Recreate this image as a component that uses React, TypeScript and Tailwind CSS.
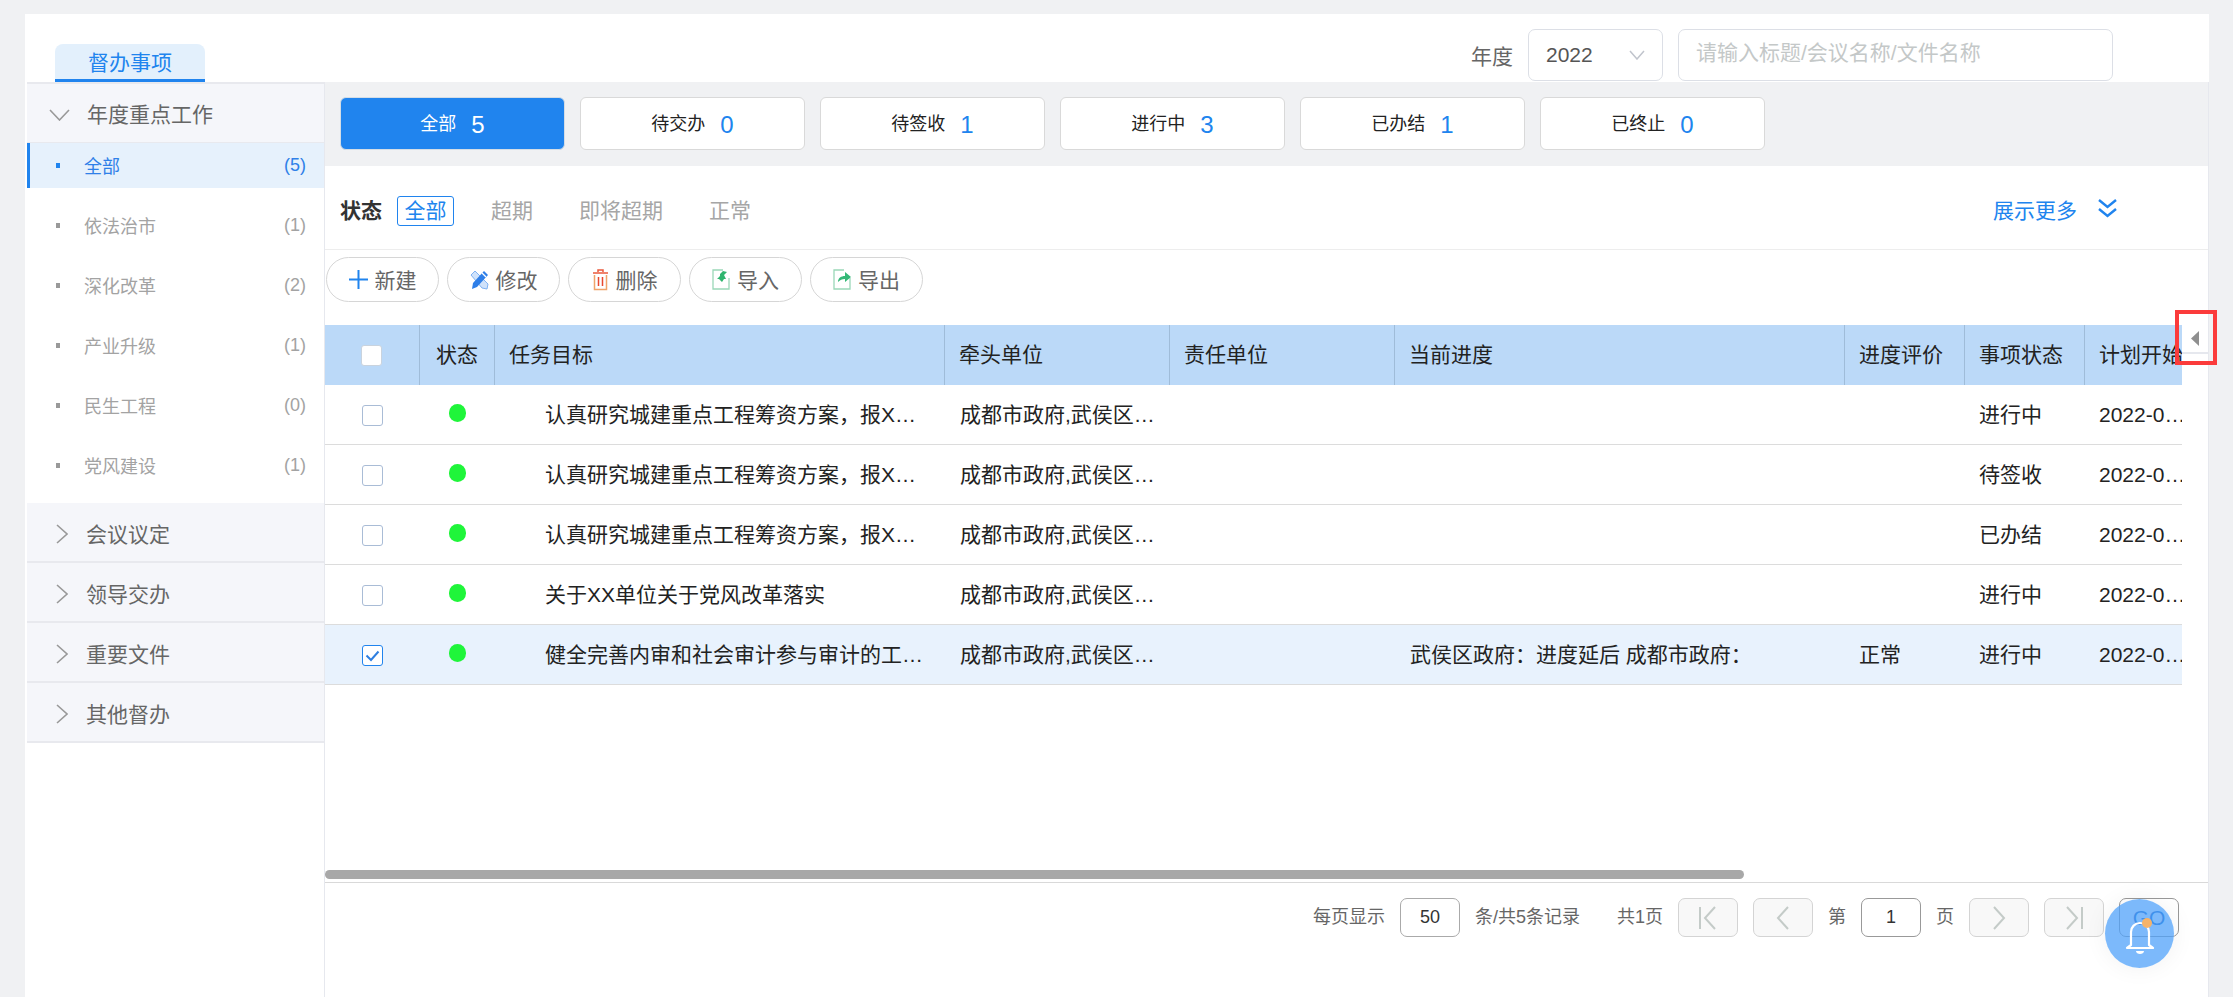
const summary = [
  { label: "全部", count: 5, active: true },
  { label: "待交办", count: 0 },
  { label: "待签收", count: 1 },
  { label: "进行中", count: 3 },
  { label: "已办结", count: 1 },
  { label: "已终止", count: 0 },
];

const categories = [
  { label: "全部", count: 5, active: true },
  { label: "依法治市", count: 1 },
  { label: "深化改革", count: 2 },
  { label: "产业升级", count: 1 },
  { label: "民生工程", count: 0 },
  { label: "党风建设", count: 1 },
];

const longTask = "认真研究城建重点工程筹资方案，报XX市";
const units = "成都市政府,武侯区政府";

const rows = [
  { task: longTask, state: "进行中" },
  { task: longTask, state: "待签收" },
  { task: longTask, state: "已办结" },
  { task: "关于XX单位关于党风改革落实", state: "进行中" },
  {
    task: "健全完善内审和社会审计参与审计的工作机",
    progress: "武侯区政府：进度延后 成都市政府：",
    rating: "正常",
    state: "进行中",
    selected: true,
  },
];

const gridCols =
  "grid w-[1880px] grid-cols-[95px_75px_450px_225px_225px_450px_120px_120px_120px]";

function Chevron({ open }: { open?: boolean }) {
  return open ? (
    <svg width="21" height="12" viewBox="0 0 21 12" fill="none" className="shrink-0">
      <path d="M1 1l9.5 10L20 1" stroke="#999" strokeWidth="1.6" />
    </svg>
  ) : (
    <svg width="12" height="20" viewBox="0 0 12 20" fill="none" className="shrink-0">
      <path d="M1 1l10 9-10 9" stroke="#999" strokeWidth="1.6" />
    </svg>
  );
}

function AccordionHead({ label }: { label: string }) {
  return (
    <div className="flex h-[60px] items-center border-b-2 border-[#e8e9ee] bg-[#f5f6fa] text-[21px] text-[#666]">
      <div className="ml-[29px] mr-[18px] flex translate-y-[2px]">
        <Chevron />
      </div>
      <span className="translate-y-[3px]">{label}</span>
    </div>
  );
}

function Checkbox({ checked, head }: { checked?: boolean; head?: boolean }) {
  return (
    <span
      className={
        checked
          ? "flex h-[21px] w-[21px] items-center justify-center rounded-[3px] border border-[#2084ee] bg-white"
          : head
            ? "block h-[21px] w-[21px] rounded-[3px] border border-[#c9d3de] bg-white"
            : "block h-[21px] w-[21px] rounded-[3px] border border-[#a9bcd6] bg-white"
      }
    >
      {checked && (
        <svg width="15" height="12" viewBox="0 0 15 12" fill="none">
          <path d="M1.5 5.5l4.5 4.5 7.5-8.500" stroke="#2f7fe0" strokeWidth="2" />
        </svg>
      )}
    </span>
  );
}

function ToolIcon({ name }: { name: string }) {
  if (name === "new") {
    return (
      <svg width="19" height="19" viewBox="0 0 19 19" fill="none">
        <path d="M9.500 0v19M0 9.500h19" stroke="#2084ee" strokeWidth="2" />
      </svg>
    );
  }
  if (name === "edit") {
    return (
      <svg width="19" height="20" viewBox="0 0 19 20" fill="none">
        <path d="M1 5l4-4 13 13-1 5-5-1z" fill="#cfe2fb" stroke="#7fb2f2" strokeWidth="1" />
        <path d="M14 1l4 4L7 17l-5 2 1-6z" fill="#2f7fe8" />
        <path d="M12 3l4 4" stroke="#fff" strokeWidth="1.200" />
      </svg>
    );
  }
  if (name === "delete") {
    return (
      <svg width="17" height="22" viewBox="0 0 17 22" fill="none">
        <path d="M1 4h15M6 3V1h5v2" stroke="#ea5a3c" strokeWidth="1.500" />
        <path d="M2.500 6v14.500h12V6" stroke="#f0a36a" strokeWidth="1.500" />
        <path d="M6.500 8v9M10.500 8v9" stroke="#e8482f" strokeWidth="1.500" />
      </svg>
    );
  }
  return (
    <svg width="18" height="21" viewBox="0 0 18 21" fill="none">
      <path d="M11 1H1v19h16V9" stroke="#9ad8b8" strokeWidth="1.300" />
      {name === "import" ? (
        <path d="M11 2l4 1-3 3 2 4H12l-2 3-3-3H5l3-3V5z" fill="#2fb56e" />
      ) : (
        <path d="M5 13c0-4 3-6 7-6V3l6 5-6 5V10c-3 0-5 1-7 3z" fill="#35b877" />
      )}
    </svg>
  );
}

function PageButton({ kind }: { kind: string }) {
  return (
    <button className="flex h-[39px] w-[60px] items-center justify-center rounded-[7px] border border-[#d4d4d4] bg-[#f8f8f8]">
      <svg width="22" height="26" viewBox="0 0 22 26" fill="none">
        {kind === "first" && <path d="M3 2v22M18 2L8 13l10 11" stroke="#c4cbc8" strokeWidth="2" />}
        {kind === "prev" && <path d="M16 2L6 13l10 11" stroke="#c4cbc8" strokeWidth="2" />}
        {kind === "next" && <path d="M6 2l10 11L6 24" stroke="#c4cbc8" strokeWidth="2" />}
        {kind === "last" && <path d="M19 2v22M4 2l10 11L4 24" stroke="#c4cbc8" strokeWidth="2" />}
      </svg>
    </button>
  );
}

function PageInput({ value, dark }: { value: string; dark?: boolean }) {
  return (
    <span
      className={
        dark
          ? "flex h-[39px] w-[60px] items-center justify-center rounded-[7px] border border-[#999] text-[18px] text-[#333]"
          : "flex h-[39px] w-[60px] items-center justify-center rounded-[7px] border border-[#aaa] text-[18px] text-[#333]"
      }
    >
      {value}
    </span>
  );
}

export default function App() {
  return (
    <div className="relative h-[997px] w-[2233px] overflow-hidden bg-[#f0f1f3] pl-[25px] pt-[14px] font-['Liberation_Sans','Noto_Sans_CJK_SC',sans-serif]">
      <div className="flex h-[983px] w-[2184px] flex-col bg-white">
        {/* top bar */}
        <div className="flex h-[68px] shrink-0 items-end justify-between">
          <div className="ml-[30px] flex h-[38px] w-[150px] items-center justify-center rounded-t-[8px] border-b-[3px] border-[#2084ee] bg-[#e3f0fc] pt-[2px] text-[21px] text-[#2084ee]">
            督办事项
          </div>
          <div className="mb-[1px] mr-[96px] flex items-center">
            <span className="mr-[15px] translate-y-[2px] text-[21px] text-[#666]">年度</span>
            <div className="mr-[15px] flex h-[52px] w-[135px] items-center justify-between rounded-[7px] border border-[#dcdfe6] pl-[17px] pr-[17px] text-[21px] text-[#555]">
              2022
              <svg width="16" height="10" viewBox="0 0 16 10" fill="none">
                <path d="M1 1l7 8 7-8" stroke="#c0c4cc" strokeWidth="1.500" />
              </svg>
            </div>
            <div className="flex h-[52px] w-[435px] items-center rounded-[7px] border border-[#dcdfe6] pb-[4px] pl-[17px] text-[21px] text-[#c4c8c8]">
              请输入标题/会议名称/文件名称
            </div>
          </div>
        </div>

        <div className="flex min-h-0 flex-1">
          {/* sidebar */}
          <aside className="ml-[2px] w-[298px] shrink-0 border-r border-[#e6e8ee] border-t-2 border-t-[#e8e9ee]">
            <div className="flex h-[59px] items-center border-b border-[#e8e9ee] bg-[#f5f6fa] text-[21px] text-[#666]">
              <div className="ml-[22px] mr-[17px] flex translate-y-[2px]">
                <Chevron open />
              </div>
              <span className="translate-y-[2px]">年度重点工作</span>
            </div>
            <div className="flex flex-col gap-[15px] pb-[15px]">
              {categories.map((item) => (
                <div
                  key={item.label}
                  className={
                    item.active
                      ? "flex h-[45px] items-center border-l-[3px] border-[#2084ee] bg-[#e6f1fc] pl-[26px] pr-[18px] text-[18px] text-[#2f80e8]"
                      : "flex h-[45px] items-center border-l-[3px] border-transparent pl-[26px] pr-[18px] text-[18px] text-[#a3a3a3]"
                  }
                >
                  <span
                    className={
                      item.active
                        ? "mr-[24px] h-[5px] w-[4px] bg-[#2084ee]"
                        : "mr-[24px] h-[5px] w-[4px] bg-[#999]"
                    }
                  />
                  <span className="flex-1 translate-y-[2px]">{item.label}</span>
                  <span>({item.count})</span>
                </div>
              ))}
            </div>
            <AccordionHead label="会议议定" />
            <AccordionHead label="领导交办" />
            <AccordionHead label="重要文件" />
            <AccordionHead label="其他督办" />
          </aside>

          {/* main */}
          <main className="relative flex min-w-0 flex-1 flex-col border-r border-[#e6e8ee]">
            <div className="flex h-[84px] shrink-0 gap-[15px] bg-[#f0f1f3] px-[15px] py-[15px]">
              {summary.map((item) => (
                <div
                  key={item.label}
                  className={
                    item.active
                      ? "flex h-[53px] w-[225px] items-center justify-center gap-[15px] rounded-[6px] border border-[#d4dde6] bg-[#2084ee] pt-[2px] text-[18px] text-white"
                      : "flex h-[53px] w-[225px] items-center justify-center gap-[15px] rounded-[6px] border border-[#d9d9d9] bg-white pt-[2px] text-[18px] text-[#222]"
                  }
                >
                  {item.label}
                  <span className={item.active ? "text-[24px] text-white" : "text-[24px] text-[#2084ee]"}>
                    {item.count}
                  </span>
                </div>
              ))}
            </div>

            {/* status filter */}
            <div className="flex h-[84px] shrink-0 items-center border-b border-[#ededed] pl-[15px] pr-[90px] pt-[6px] text-[21px]">
              <span className="mr-[15px] font-bold text-[#333]">状态</span>
              <span className="mr-[37px] flex h-[30px] w-[57px] items-center justify-center rounded-[3px] border border-[#2084ee] text-[#2084ee]">
                全部
              </span>
              <span className="mr-[46px] text-[#a6a6a6]">超期</span>
              <span className="mr-[46px] text-[#a6a6a6]">即将超期</span>
              <span className="text-[#a6a6a6]">正常</span>
              <span className="ml-auto mr-[20px] text-[#2084ee]">展示更多</span>
              <svg width="21" height="19" viewBox="0 0 21 19" fill="none" className="-mt-[5px]">
                <path d="M2 1l8.500 7L19 1M2 10l8.500 7 8.500-7" stroke="#2084ee" strokeWidth="2.400" />
              </svg>
            </div>

            {/* toolbar */}
            <div className="flex shrink-0 gap-[8px] pb-[23px] pl-[1px] pt-[7px]">
              {[
                { icon: "new", label: "新建" },
                { icon: "edit", label: "修改" },
                { icon: "delete", label: "删除" },
                { icon: "import", label: "导入" },
                { icon: "export", label: "导出" },
              ].map((btn) => (
                <button
                  key={btn.label}
                  className="flex h-[45px] w-[113px] items-center justify-center gap-[7px] rounded-full border border-[#d6d6d6] bg-white text-[21px] text-[#666]"
                >
                  <ToolIcon name={btn.icon} />
                  <span className="translate-y-[1px]">{btn.label}</span>
                </button>
              ))}
            </div>

            {/* table */}
            <div className="flex h-[557px] w-[1857px] shrink-0 flex-col overflow-hidden">
              <div className="flex-1">
                <div className={`${gridCols} h-[60px] items-center bg-[#bbd9f8] text-[21px] text-[#222]`}>
                  <div className="flex h-full items-center justify-center border-r border-[#9fbcd9] pr-[1px]">
                    <Checkbox head />
                  </div>
                  <div className="flex h-full items-center justify-center border-r border-[#9fbcd9]">状态</div>
                  {["任务目标", "牵头单位", "责任单位", "当前进度", "进度评价", "事项状态", "计划开始时间"].map(
                    (title) => (
                      <div
                        key={title}
                        className="flex h-full items-center overflow-hidden whitespace-nowrap border-r border-[#9fbcd9] pl-[14px] pr-[15px]"
                      >
                        {title}
                      </div>
                    ),
                  )}
                </div>
                {rows.map((row, i) => (
                  <div
                    key={i}
                    className={
                      row.selected
                        ? `${gridCols} h-[60px] border-b border-[#dcdcdc] bg-[#e8f2fd] text-[21px] text-[#222]`
                        : `${gridCols} h-[60px] border-b border-[#dcdcdc] text-[21px] text-[#222]`
                    }
                  >
                    <div className="flex items-center justify-center pt-[2px]">
                      <Checkbox checked={row.selected} />
                    </div>
                    <div className="flex items-center justify-center pb-[4px]">
                      <span className="h-[18px] w-[17px] rounded-full bg-[#1ff53a]" />
                    </div>
                    <div className="self-center truncate pl-[50px] pr-[17px]">{row.task}</div>
                    <div className="self-center truncate px-[15px]">{units}</div>
                    <div />
                    <div className="self-center truncate px-[15px]">{row.progress}</div>
                    <div className="self-center pl-[14px] pr-[15px]">{row.rating}</div>
                    <div className="self-center pl-[14px] pr-[15px]">{row.state}</div>
                    <div className="self-center truncate pl-[14px] pr-[15px]">2022-01-01</div>
                  </div>
                ))}
              </div>
              <div className="mb-[3px] h-[9px] w-[1419px] shrink-0 rounded-full bg-[#a8a8a8]" />
            </div>

            {/* pagination */}
            <div className="flex flex-1 items-start justify-end gap-[15px] border-t border-[#d9d9d9] pr-[29px] pt-[15px] text-[18px] text-[#666]">
              <span className="flex h-[39px] items-center">每页显示</span>
              <PageInput value="50" />
              <span className="mr-[22px] flex h-[39px] items-center">条/共5条记录</span>
              <span className="flex h-[39px] items-center">共1页</span>
              <PageButton kind="first" />
              <PageButton kind="prev" />
              <span className="flex h-[39px] items-center">第</span>
              <PageInput value="1" dark />
              <span className="flex h-[39px] items-center">页</span>
              <PageButton kind="next" />
              <PageButton kind="last" />
              <span className="flex h-[39px] w-[60px] items-center justify-center rounded-[7px] border border-[#999] text-[21px] text-[#0f5fc0]">
                GO
              </span>
            </div>

            {/* collapse handle */}
            <div className="absolute left-[1857px] top-[243px] flex h-[29px] w-[26px] items-center justify-center border-b-2 border-[#e6e8ee] bg-white">
              <svg width="8" height="15" viewBox="0 0 8 15">
                <path d="M8 0v15L0 7.500z" fill="#8f8f8f" />
              </svg>
            </div>
            <div className="absolute left-[1850px] top-[228px] h-[55px] w-[42px] border-4 border-[#fb3b3b]" />
          </main>
        </div>
      </div>

      {/* floating notification */}
      <div className="absolute bottom-[29px] right-[59px] flex h-[69px] w-[69px] items-center justify-center rounded-full bg-[#50a1fa]/75 shadow-[0_0_24px_rgba(0,0,0,0.06)]">
        <svg width="30" height="36" viewBox="0 0 30 36" fill="none" className="mt-[7px]">
          <path
            d="M6 26V13c0-5 4-9 9-9s9 4 9 9v13l4 3H2z"
            stroke="#fff"
            strokeWidth="2.200"
            strokeLinejoin="round"
          />
          <path d="M11 32h8c0 2-2 3-4 3s-4-1-4-3z" fill="#fff" />
        </svg>
        <span className="absolute left-[37px] top-[19px] h-[10px] w-[10px] rounded-full bg-[#f5b36a]" />
      </div>
    </div>
  );
}
